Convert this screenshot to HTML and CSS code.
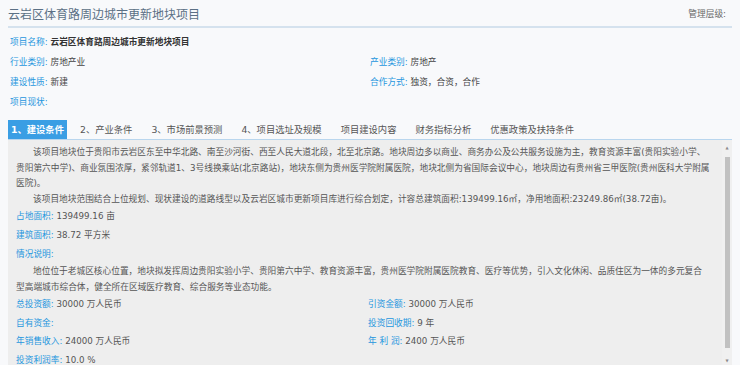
FILE: index.html
```html
<!DOCTYPE html>
<html lang="zh-CN">
<head>
  <meta charset="UTF-8" />
  <title>云岩区体育路周边城市更新地块项目</title>
  <link rel="stylesheet" href="styles.css">
</head>
<body>
  <div class="header">
    <h1>云岩区体育路周边城市更新地块项目</h1>
    <span class="level">管理层级:</span>
  </div>

  <div class="info">
    <div class="row full"><span class="label">项目名称:</span> <b>云岩区体育路周边城市更新地块项目</b></div>
    <div class="row"><span class="label">行业类别:</span> 房地产业</div>
    <div class="row"><span class="label">产业类别:</span> 房地产</div>
    <div class="row"><span class="label">建设性质:</span> 新建</div>
    <div class="row"><span class="label">合作方式:</span> 独资，合资，合作</div>
    <div class="row full"><span class="label">项目现状:</span></div>
  </div>

  <ul class="tabs">
    <li class="active">1、建设条件</li>
    <li>2、产业条件</li>
    <li>3、市场前景预测</li>
    <li>4、项目选址及规模</li>
    <li>项目建设内容</li>
    <li>财务指标分析</li>
    <li>优惠政策及扶持条件</li>
  </ul>

  <div class="panel">
    <div class="content">
      <p class="para">该项目地块位于贵阳市云岩区东至中华北路、南至沙河街、西至人民大道北段，北至北京路。地块周边多以商业、商务办公及公共服务设施为主，教育资源丰富(贵阳实验小学、贵阳第六中学)、商业氛围浓厚，紧邻轨道1、3号线换乘站(北京路站)，地块东侧为贵州医学院附属医院，地块北侧为省国际会议中心，地块周边有贵州省三甲医院(贵州医科大学附属医院)。</p>
      <p class="para">该项目地块范围结合上位规划、现状建设的道路线型以及云岩区城市更新项目库进行综合划定，计容总建筑面积:139499.16㎡，净用地面积:23249.86㎡(38.72亩)。</p>
      <div class="field"><span class="label">占地面积:</span> 139499.16 亩</div>
      <div class="field"><span class="label">建筑面积:</span> 38.72 平方米</div>
      <div class="field"><span class="label">情况说明:</span></div>
      <p class="para">地位位于老城区核心位置，地块拟发挥周边贵阳实验小学、贵阳第六中学、教育资源丰富，贵州医学院附属医院教育、医疗等优势，引入文化休闲、品质住区为一体的多元复合型高端城市综合体，健全所在区域医疗教育、综合服务等业态功能。</p>
      <div class="grid">
        <div class="field"><span class="label">总投资额:</span> 30000 万人民币</div>
        <div class="field"><span class="label">引资金额:</span> 30000 万人民币</div>
        <div class="field"><span class="label">自有资金:</span></div>
        <div class="field"><span class="label">投资回收期:</span> 9 年</div>
        <div class="field"><span class="label">年销售收入:</span> 24000 万人民币</div>
        <div class="field"><span class="label">年 利 润:</span> 2400 万人民币</div>
        <div class="field"><span class="label">投资利润率:</span> 10.0 %</div>
        <div class="field"></div>
      </div>
    </div>
    <div class="scrollbar">
      <span class="arrow">▲</span>
      <span class="thumb"></span>
      <span class="arrow">▼</span>
    </div>
  </div>
</body>
</html>
```

FILE: styles.css
```css
body {
  margin: 0;
  padding: 0 8px;
  background: #f8f9fb;
  font-family: "DejaVu Sans", "Noto Sans CJK SC", sans-serif;
  font-size: 8.7px;
  color: #444;
}
.header {
  display: flex;
  justify-content: space-between;
  align-items: center;
  height: 26px;
  border-bottom: 2px solid #d5e2ee;
}
h1 {
  margin: 0;
  font-size: 12px;
  font-weight: normal;
  color: #5b7085;
}
.level {
  color: #666;
  padding-right: 6px;
}
.info {
  display: grid;
  grid-template-columns: 360px 1fr;
  margin: 4px 0 0 2px;
}
.row {
  line-height: 20px;
  height: 20px;
  color: #444;
}
.row.full {
  grid-column: 1 / 3;
}
.row b {
  color: #333;
}
.label {
  color: #2596de;
}
.tabs {
  display: flex;
  gap: 11px;
  list-style: none;
  margin: 8px 0 0;
  padding: 0;
  border-bottom: 1px solid #b9d6ee;
  font-size: 9.3px;
}
.tabs li {
  height: 19px;
  line-height: 19px;
  padding: 0 4px;
  color: #555;
}
.tabs li.active {
  background: #3a9ee4;
  color: #fff;
  font-weight: bold;
  padding: 0 3px;
  margin-right: -2px;
}
.panel {
  display: flex;
  height: 226px;
  overflow: hidden;
  background: #eeeeee;
  color: #555;
}
.content {
  flex: 1;
  padding: 5px 12px 0 8px;
}
.scrollbar {
  width: 10px;
  display: flex;
  flex-direction: column;
  align-items: center;
  padding: 5px 0 2px;
  background: #f0f0f0;
}
.arrow {
  font-size: 4px;
  line-height: 6px;
  color: #8a8a8a;
}
.thumb {
  flex: 1;
  width: 5px;
  margin: 6px 0 10px;
  background: #c1c1c1;
}
.para {
  margin: 0;
  line-height: 15.5px;
  text-indent: 17px;
}
.field {
  line-height: 19px;
  height: 19px;
}
.grid {
  display: grid;
  grid-template-columns: 352px 1fr;
}
.grid .field {
  line-height: 18.5px;
  height: 18.5px;
}
```
